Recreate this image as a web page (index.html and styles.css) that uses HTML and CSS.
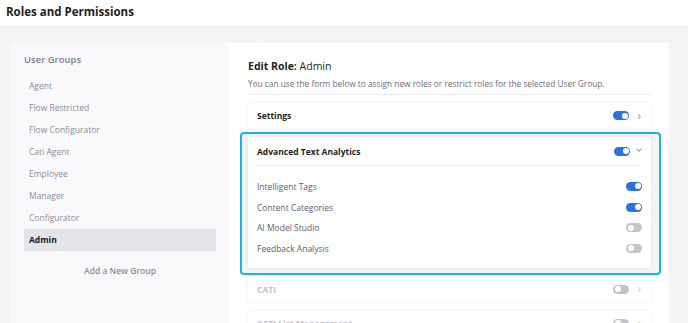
FILE: index.html
```html
<html>
<head>
<title>Roles and Permissions</title>
<link rel="stylesheet" href="styles.css">
</head>
<body>
<div class="topbar"><h1>Roles and Permissions</h1></div>

<div class="layout">
  <div class="groups">
    <h2>User Groups</h2>
    <ul class="group-list">
      <li>Agent</li>
      <li>Flow Restricted</li>
      <li>Flow Configurator</li>
      <li>Cati Agent</li>
      <li>Employee</li>
      <li>Manager</li>
      <li>Configurator</li>
      <li class="active">Admin</li>
    </ul>
    <div class="add-group">Add a New Group</div>
  </div>

  <div class="editor">
    <h3><b>Edit Role:</b> Admin</h3>
    <p class="intro">You can use the form below to assign new roles or restrict roles for the selected User Group.</p>

    <div class="modules">
      <div class="card">
        <div class="card-head">
          <span class="card-title">Settings</span>
          <span class="toggle on"></span>
          <span class="chev">&#8250;</span>
        </div>
      </div>

      <div class="focus">
        <div class="card">
          <div class="card-head open">
            <span class="card-title">Advanced Text Analytics</span>
            <span class="toggle on"></span>
            <span class="chev down"></span>
          </div>
          <div class="card-body">
            <div class="perm"><span>Intelligent Tags</span><span class="toggle on"></span></div>
            <div class="perm"><span>Content Categories</span><span class="toggle on"></span></div>
            <div class="perm"><span>AI Model Studio</span><span class="toggle"></span></div>
            <div class="perm"><span>Feedback Analysis</span><span class="toggle"></span></div>
          </div>
        </div>
      </div>

      <div class="card muted">
        <div class="card-head">
          <span class="card-title">CATI</span>
          <span class="toggle"></span>
          <span class="chev">&#8250;</span>
        </div>
      </div>

      <div class="card muted">
        <div class="card-head">
          <span class="card-title">CATI List Management</span>
          <span class="toggle"></span>
          <span class="chev">&#8250;</span>
        </div>
      </div>
    </div>
  </div>
</div>
</body>
</html>
```

FILE: styles.css
```css
html, body {
  margin: 0;
  padding: 0;
}
body {
  font-family: 'Open Sans', 'Noto Sans', sans-serif;
  background: #f3f4f6;
  color: #1f1f24;
  height: 323px;
  overflow: hidden;
}
.topbar {
  height: 26px;
  background: #fff;
  box-shadow: 0 1px 3px rgba(0,0,0,.07);
  padding-left: 6px;
  position: relative;
}
.topbar h1 {
  margin: 0;
  font-size: 11.5px;
  font-weight: 700;
  line-height: 24px;
}
.layout {
  display: flex;
  padding: 17px 19px 0 10px;
  height: 280px;
}

/* user groups column */
.groups {
  width: 192px;
  background: #f9f9fb;
  padding: 10px 13px 0 14px;
}
.groups h2 {
  margin: 0 0 8px;
  font-size: 9.5px;
  line-height: 14px;
  color: #7d8095;
  font-weight: 600;
}
.group-list {
  list-style: none;
  margin: 0;
  padding: 0;
}
.group-list li {
  height: 22px;
  line-height: 22px;
  padding-left: 5px;
  font-size: 8.5px;
  color: #8b8d9b;
}
.group-list li.active {
  background: #e4e4e9;
  color: #17171c;
  font-weight: 700;
}
.add-group {
  text-align: center;
  font-size: 8.5px;
  font-weight: 600;
  color: #8a8c9d;
  margin-top: 10px;
  line-height: 20px;
}

/* edit role column */
.editor {
  flex: 1;
  background: #fff;
  padding: 15px 18px 0 19px;
}
.editor h3 {
  margin: 0;
  font-size: 10.5px;
  font-weight: 400;
  line-height: 16px;
}
.intro {
  margin: 3px 0 0;
  font-size: 8.3px;
  color: #6c6c7c;
  line-height: 14px;
  padding-bottom: 3px;
  border-bottom: 1px solid #ececf0;
}
.modules {
  display: flex;
  flex-direction: column;
  gap: 9px;
  margin-top: 8px;
}
.card {
  background: #fff;
  box-shadow: 0 0 3px rgba(0,0,0,.09);
  border-radius: 2px;
}
.card-head {
  display: flex;
  align-items: center;
  height: 25px;
  padding: 0 10px 0 9px;
}
.card-title {
  flex: 1;
  font-size: 8.5px;
  font-weight: 700;
}
.card-head.open {
  height: 28px;
  margin: 0 9px;
  padding: 0;
  border-bottom: 1px solid #efeff2;
}
.card-head .chev {
  width: 12px;
  text-align: right;
  color: #9a9aa4;
  font-size: 12px;
  line-height: 12px;
}
.chev.down::after {
  content: "";
  display: inline-block;
  width: 3px;
  height: 3px;
  border-right: 1px solid #9a9aa4;
  border-bottom: 1px solid #9a9aa4;
  transform: rotate(45deg);
  margin: 0 1px 4px 0;
}
.muted .card-title {
  color: #c2c2c8;
}
.muted .chev {
  color: #c8c8ce;
}

.focus {
  margin: -5px -10px -7px -8px;
  padding: 3px 8px 5px 6px;
  border: 2px solid #1eb0e9;
  border-radius: 4px;
  background: #f3f4f6;
}
.card-body {
  padding: 10px 9px 9px;
}
.perm {
  display: flex;
  align-items: center;
  justify-content: space-between;
  height: 20.7px;
  font-size: 8.5px;
  color: #5d5e70;
}

.toggle {
  width: 16px;
  height: 9px;
  border-radius: 5px;
  background: #c4c4c8;
  position: relative;
}
.toggle::after {
  content: "";
  position: absolute;
  top: 1.5px;
  left: 1.5px;
  width: 6px;
  height: 6px;
  border-radius: 50%;
  background: #fff;
}
.toggle.on {
  background: #2a72df;
}
.toggle.on::after {
  left: 8.5px;
}
```
